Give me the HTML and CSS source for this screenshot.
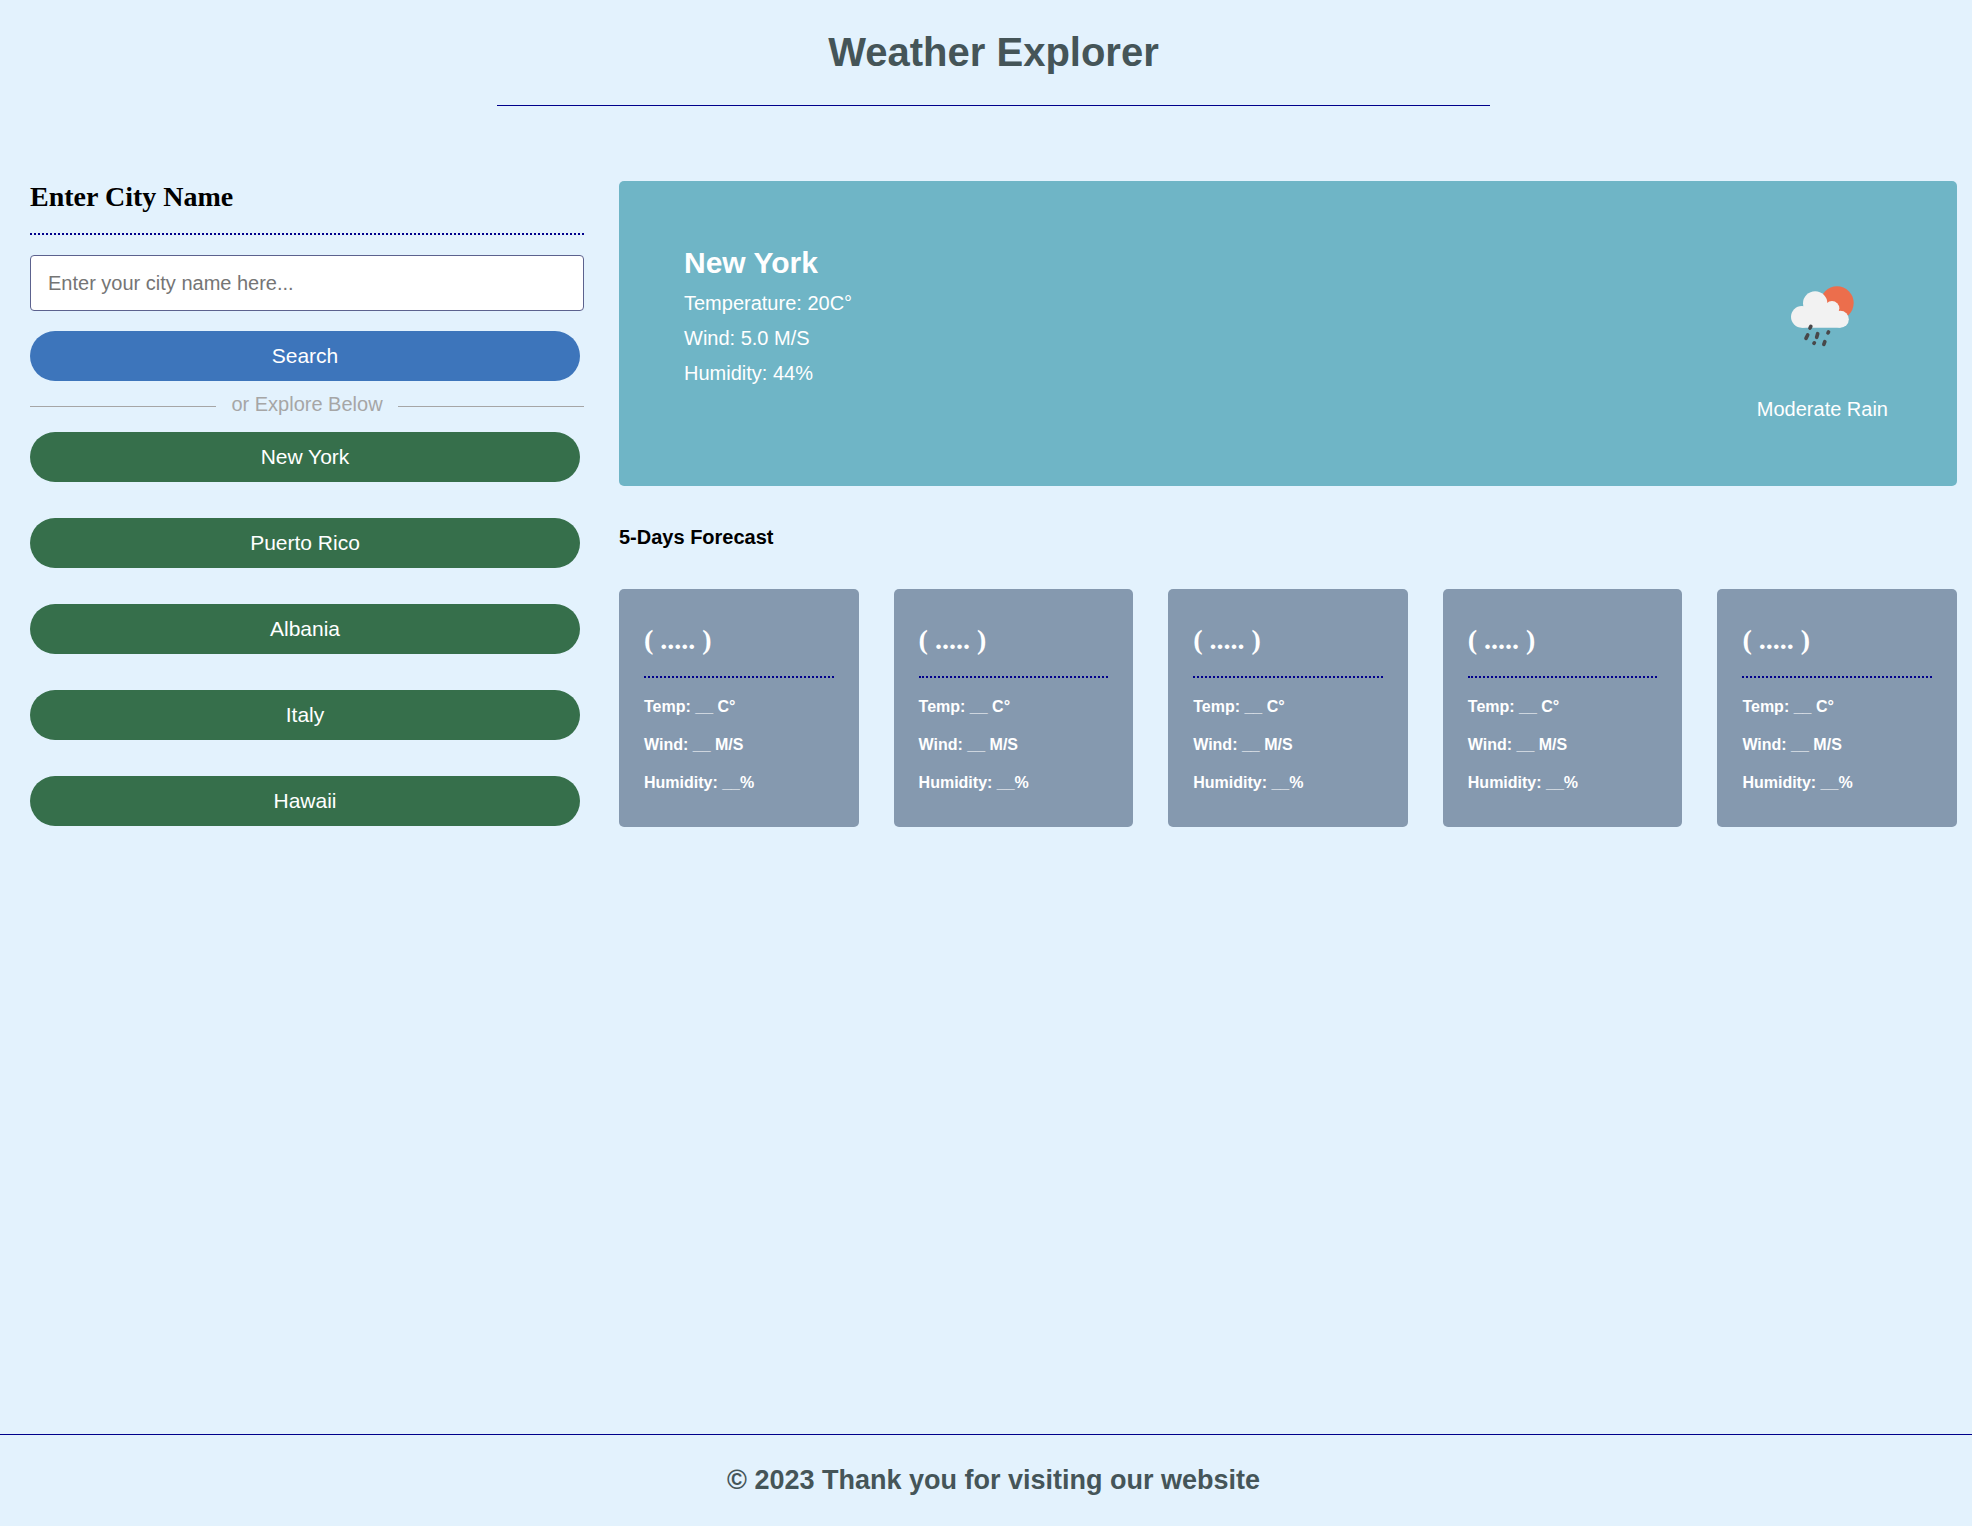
FILE: index.html
```html
<!DOCTYPE html>
<html lang="en">
<head>
  <meta charset="utf-8">
  <meta name="viewport" content="width=device-width, initial-scale=1">
  <title>Weather Explorer</title>
  <link rel="stylesheet" href="styles.css">
</head>
<body>
  <header class="header">
    <h1 class="header-title">Weather Explorer</h1>
    <hr class="header-line">
  </header>

  <main class="page">
    <aside class="sidebar">
      <label class="section-title" for="city">Enter City Name</label>
      <input class="city-input" id="city" type="text" placeholder="Enter your city name here...">
      <button class="btn btn-search" type="button">Search</button>
      <div class="divider"><span>or Explore Below</span></div>
      <div class="city-list">
        <button class="btn" type="button">New York</button>
        <button class="btn" type="button">Puerto Rico</button>
        <button class="btn" type="button">Albania</button>
        <button class="btn" type="button">Italy</button>
        <button class="btn" type="button">Hawaii</button>
      </div>
    </aside>

    <div class="results">
      <section class="current">
        <div class="current-details">
          <h2 class="current-city">New York</h2>
          <p>Temperature: 20C°</p>
          <p>Wind: 5.0 M/S</p>
          <p>Humidity: 44%</p>
        </div>
        <div class="current-conditions">
          <svg class="weather-icon" viewBox="0 0 252 252" aria-hidden="true">
            <circle cx="171" cy="81" r="50" fill="#ec6e4c"/>
            <g fill="#f2f2f2">
              <circle cx="65.500" cy="122.500" r="32.500"/>
              <circle cx="105.500" cy="82" r="36.500"/>
              <circle cx="156" cy="97" r="22"/>
              <circle cx="181" cy="129.500" r="25.500"/>
              <path d="M65 96H156L181 112V155H65Z"/>
            </g>
            <g stroke="#48484a" stroke-width="11" stroke-linecap="round">
              <path d="M92.500 151L90 156M83 177L78 187M113 173L110 184M145.500 168L144 170.500M103 200.500L102 202M134.500 197L131.500 205"/>
            </g>
          </svg>
          <p>Moderate Rain</p>
        </div>
      </section>

      <h2 class="forecast-title">5-Days Forecast</h2>
      <section class="forecast">
        <article class="day">
          <h3 class="section-title">( ..... )</h3>
          <p>Temp: __ C°</p>
          <p>Wind: __ M/S</p>
          <p>Humidity: __%</p>
        </article>
        <article class="day">
          <h3 class="section-title">( ..... )</h3>
          <p>Temp: __ C°</p>
          <p>Wind: __ M/S</p>
          <p>Humidity: __%</p>
        </article>
        <article class="day">
          <h3 class="section-title">( ..... )</h3>
          <p>Temp: __ C°</p>
          <p>Wind: __ M/S</p>
          <p>Humidity: __%</p>
        </article>
        <article class="day">
          <h3 class="section-title">( ..... )</h3>
          <p>Temp: __ C°</p>
          <p>Wind: __ M/S</p>
          <p>Humidity: __%</p>
        </article>
        <article class="day">
          <h3 class="section-title">( ..... )</h3>
          <p>Temp: __ C°</p>
          <p>Wind: __ M/S</p>
          <p>Humidity: __%</p>
        </article>
      </section>
    </div>
  </main>

  <footer class="footer">© 2023 Thank you for visiting our website</footer>
</body>
</html>
```
FILE: styles.css
```css
* {
  box-sizing: border-box;
  margin: 0;
  padding: 0;
}

body {
  display: flex;
  flex-direction: column;
  min-height: 100vh;
  background: #e3f2fd;
  font-family: "Liberation Sans", Arial, sans-serif;
  font-size: 20px;
  line-height: 23px;
}

.header {
  padding: 29px 0 75px 15px;
  color: #455558;
  text-align: center;
}

.header-title {
  font-size: 40px;
  line-height: 46px;
}

.header-line {
  width: calc(50% + 15px);
  margin: 30px auto 0;
  border: 0;
  border-top: 1px solid #00008b;
}

.page {
  display: grid;
  grid-template-columns: 277fr 669fr;
  gap: 35px;
  flex: 1;
  align-items: start;
  padding: 0 15px 40px 30px;
}

.section-title {
  display: block;
  margin-bottom: 20px;
  padding-bottom: 20px;
  border-bottom: 2px dotted #00008b;
  font-family: "Liberation Serif", "Times New Roman", serif;
  font-size: 28px;
  font-weight: bold;
  line-height: 32px;
}

.city-input {
  display: block;
  width: 100%;
  height: 56px;
  margin-bottom: 20px;
  padding: 0 17px;
  border: 1px solid #5c628e;
  border-radius: 4px;
  background: #fff;
  font: inherit;
}

.city-input::placeholder {
  color: #757575;
}

.btn {
  display: block;
  width: calc(100% - 4px);
  height: 50px;
  border: 0;
  border-radius: 25px;
  background: #366f4b;
  color: #fff;
  font-family: inherit;
  font-size: 21px;
  cursor: pointer;
}

.btn-search {
  background: #3d75bb;
}

.divider {
  display: flex;
  align-items: center;
  gap: 15px;
  margin: 12px 0 16px;
  color: #a6a6a6;
}

.divider::before,
.divider::after {
  content: "";
  flex: 1;
  margin-top: 4px;
  border-top: 1px solid #a6a6a6;
}

.city-list {
  display: grid;
  gap: 36px;
}

.current {
  display: flex;
  justify-content: space-between;
  padding: 65px 69px 65px 65px;
  border-radius: 5px;
  background: #6fb5c6;
  color: #fff;
}

.current-details {
  display: flex;
  flex-direction: column;
  gap: 12px;
}

.current-city {
  font-size: 30px;
  line-height: 34px;
}

.current-conditions {
  text-align: center;
}

.weather-icon {
  display: block;
  width: 84px;
  height: 84px;
  margin: 30px auto 38px;
}

.forecast-title {
  margin: 40px 0;
  font-size: 20px;
}

.forecast {
  display: grid;
  grid-template-columns: repeat(5, 1fr);
  gap: 35px;
}

.day {
  padding: 35px 25px;
  border-radius: 5px;
  background: #8599af;
  color: #fff;
  font-size: 16px;
  font-weight: bold;
  line-height: 18px;
}

.day p + p {
  margin-top: 20px;
}

.footer {
  padding: 30px 0 30px 15px;
  border-top: 1px solid #00008b;
  color: #455558;
  font-size: 27px;
  font-weight: bold;
  line-height: 31px;
  text-align: center;
}
```
